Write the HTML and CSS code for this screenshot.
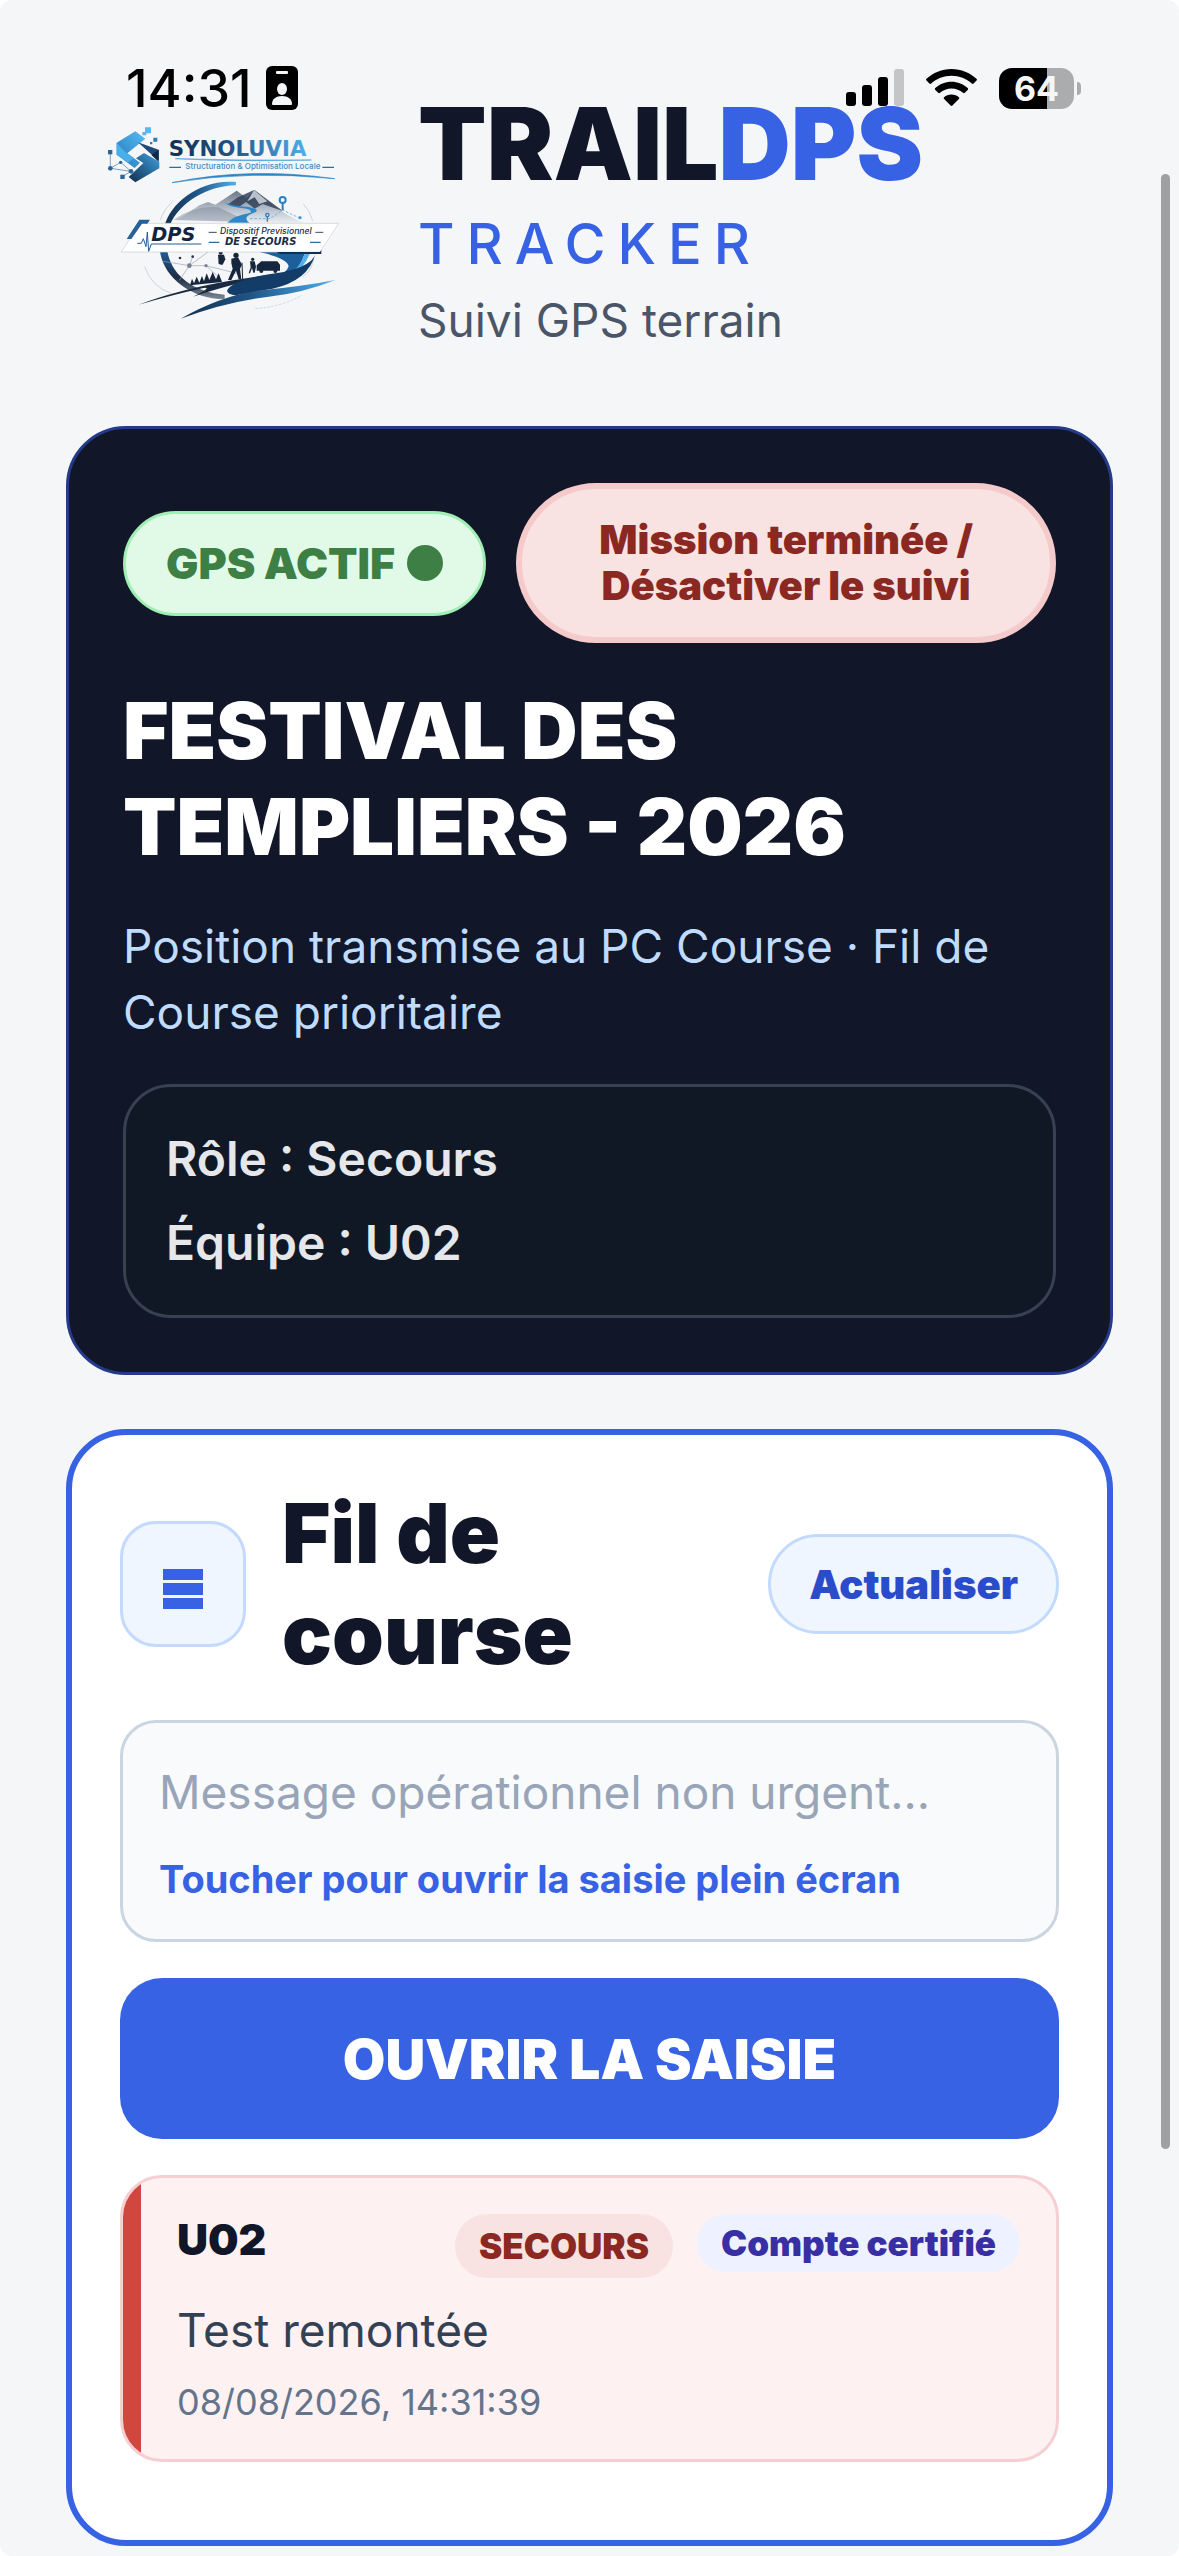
FILE: index.html
```
<!DOCTYPE html>
<html lang="fr">
<head>
    <meta charset="UTF-8">
    <meta name="viewport" content="width=device-width, initial-scale=1.0">
    <title>TrailDPS Tracker</title>
    <link rel="stylesheet" href="styles.css">
</head>
<body>
    <div class="screen">
        <div class="status-bar">
            <div class="status-left">
                <span class="status-time">14:31</span>
                <svg width="32" height="44" viewBox="0 0 32 44" aria-hidden="true">
                    <rect width="32" height="44" rx="6" fill="#000"/>
                    <rect x="10" y="5" width="12" height="3" rx="1" fill="#f5f6f8"/>
                    <ellipse cx="16" cy="23" rx="5" ry="6" fill="#f5f6f8"/>
                    <path d="M6 38c0-5 4-8 10-8s10 3 10 8c0 1-1 1-2 1H8c-1 0-2 0-2-1z" fill="#f5f6f8"/>
                </svg>
            </div>
            <div class="status-right">
                <svg width="58" height="38" viewBox="0 0 58 38" aria-hidden="true">
                    <rect y="23" width="10" height="14" rx="3"/>
                    <rect x="16" y="16" width="10" height="21" rx="3"/>
                    <rect x="32" y="8" width="10" height="29" rx="3"/>
                    <rect x="48" width="10" height="37" rx="3" fill="#c4c5c7"/>
                </svg>
                <svg width="51" height="38" viewBox="0 0 51 38" aria-hidden="true">
                    <path d="M25.500 0C15.800 0 7 3.800.500 9.800c-.6.600-.6 1.200 0 1.800l2.900 2.900c.5.500 1.200.5 1.800 0C10.500 9.700 17.700 6.800 25.500 6.800s15 2.900 20.300 7.700c.6.500 1.300.5 1.800 0l2.900-2.900c.6-.6.6-1.200 0-1.800C44 3.800 35.200 0 25.500 0z"/>
                    <path d="M25.500 12.800c-6.200 0-11.900 2.400-16.200 6.300-.6.600-.6 1.200 0 1.800l2.900 2.900c.5.500 1.200.5 1.800 0 3-2.700 7.100-4.300 11.500-4.300s8.500 1.600 11.500 4.300c.6.500 1.300.5 1.800 0l2.900-2.900c.6-.6.6-1.200 0-1.800-4.300-3.900-10-6.300-16.200-6.300z"/>
                    <path d="M25.500 25.500c-2.900 0-5.500 1-7.400 2.700-.6.500-.6 1.200 0 1.800l6.500 6.600c.5.500 1.300.5 1.800 0l6.500-6.600c.6-.6.6-1.300 0-1.800-1.900-1.700-4.500-2.700-7.400-2.700z"/>
                </svg>
                <div class="battery"><span class="battery-level">64</span></div>
            </div>
        </div>

        <main class="app">
            <header class="app-header">
                <svg class="logo" viewBox="0 0 810 660" role="img" aria-label="Synoluvia DPS">
                    <defs>
                        <linearGradient id="navy" x1="0" y1="0" x2="1" y2="0">
                            <stop offset="0" stop-color="#14304f"/>
                            <stop offset="0.450" stop-color="#1f5486"/>
                            <stop offset="1" stop-color="#4fb0ee"/>
                        </linearGradient>
                        <linearGradient id="ribbon" x1="0" y1="1" x2="1" y2="0">
                            <stop offset="0" stop-color="#2477b8"/>
                            <stop offset="1" stop-color="#55bdf5"/>
                        </linearGradient>
                        <linearGradient id="ribbonDark" x1="0" y1="1" x2="1" y2="0">
                            <stop offset="0" stop-color="#122c4c"/>
                            <stop offset="1" stop-color="#3fa2e2"/>
                        </linearGradient>
                        <linearGradient id="peak" x1="0" y1="0" x2="0" y2="1">
                            <stop offset="0" stop-color="#2c3c54"/>
                            <stop offset="0.600" stop-color="#a3aebd"/>
                            <stop offset="1" stop-color="#eef1f5"/>
                        </linearGradient>
                        <linearGradient id="ring" x1="0" y1="0" x2="0" y2="1">
                            <stop offset="0" stop-color="#1f5c96"/>
                            <stop offset="0.550" stop-color="#1c2c44"/>
                            <stop offset="1" stop-color="#7f8894"/>
                        </linearGradient>
                    </defs>

                    <!-- Synoluvia -->
                    <path d="M80 98l56-34 30 22-54 44 38 28-16 16-54-40z" fill="url(#ribbon)"/>
                    <path d="M144 97l62 22v34l-62-56z" fill="#1f4a78"/>
                    <path d="M206 119v36l-22-20z" fill="#10294a"/>
                    <path d="M208 155v20l-72 42-20-16 44-42-22-14 24-16z" fill="url(#ribbonDark)"/>
                    <path d="M80 98v36l34 24 18-14-26-18z" fill="#4aaee9"/>
                    <path d="M165 52h18v18h-18zM157 66h12v10h-12z" fill="#55b9f2"/>
                    <path d="M190 83h12v12h-12zM180 96h7v7h-7z" fill="#2f7ab2"/>
                    <g stroke="#3b78a8" stroke-width="2" fill="none">
                        <path d="M61 127v48l31-18 31 27-26 16M61 175l62 9"/>
                    </g>
                    <g fill="#2a6597">
                        <rect x="54" y="120" width="13" height="13"/>
                        <circle cx="61" cy="175" r="7"/>
                        <circle cx="92" cy="157" r="5"/>
                        <circle cx="123" cy="184" r="7"/>
                        <rect x="91" y="194" width="13" height="13"/>
                    </g>
                    <text x="236" y="138" class="logo-name" fill="url(#navy)">SYNOLUVIA</text>
                    <path d="M256 146q200 6 408 4q-208 6-408-4z" fill="#4aa3dd" stroke="#4aa3dd" stroke-width="2"/>
                    <path d="M238 172h35M697 172h35" stroke="#2f6d9e" stroke-width="4"/>
                    <text x="286" y="178" class="logo-tagline">Structuration &amp; Optimisation Locale</text>
                    <path d="M246 218q230-48 488-12q-258-26-488 12z" fill="#2f86c4" stroke="#2f86c4" stroke-width="2"/>

                    <!-- mountains, route and ring -->
                    <path d="M224 348C240 280 330 206 438 216v10C350 228 268 278 240 345z" fill="url(#navy)"/>
                    <path d="M262 330l66-44 26-10 22 8 64-42 30 22 24-24 90 70 60 32z" fill="url(#peak)" opacity="0.700"/>
                    <path d="M412 284l32-22 48-22 88 64-62-22-24 14-26-20-22 16z" fill="#2b3a52" opacity="0.800"/>
                    <path d="M492 240l-20 34 22-12 14 20 24-8 20 16z" fill="#f0f3f7" opacity="0.700"/>
                    <path d="M250 330q60-44 136-38l90 44z" fill="#6d7a8d" opacity="0.400"/>
                    <path d="M402 276q20 16 52 18t28 14q-50 8-70 30h66q-22-16 10-28t-18-20q-40 0-68-14z" fill="#2d88cb"/>
                    <path d="M480 326h60l38-26 50 24" fill="none" stroke="#6fb4e2" stroke-width="3" stroke-dasharray="8 5"/>
                    <g fill="none" stroke="#2d7fc0" stroke-width="6">
                        <circle cx="578" cy="270" r="9"/>
                        <path d="M578 280v20"/>
                        <circle cx="532" cy="315" r="5" stroke-width="4"/>
                        <path d="M532 321v14" stroke-width="4"/>
                    </g>
                    <circle cx="630" cy="323" r="5" fill="#4a9dd8"/>
                    <path d="M210 330q10-30 38-56M640 282q20 20 28 50M670 440q0 40-32 60M164 470q20 60 80 80" fill="none" stroke="#b7c2cf" stroke-width="2"/>
                    <path d="M210 424C220 500 300 566 404 568v-14C310 546 246 498 232 424z" fill="url(#ring)"/>
                    <path d="M500 424q90 20 96 44-10 40-150 60-50 10-22 24 190-6 222-128z" fill="#1d5f9b"/>
                    <path d="M646 424q-20 90-190 128 170-24 206-128z" fill="#4fb0ee"/>
                    <path d="M220 454l78 13 50 0 96 24M298 467l-30 44M298 467l60-44M348 467l40 36M308 440l-10 27" stroke="#9aa5b3" stroke-width="2" fill="none"/>
                    <circle cx="298" cy="467" r="7" fill="#76818f"/>
                    <circle cx="348" cy="467" r="5" fill="#76818f"/>
                    <circle cx="270" cy="444" r="4" fill="#26364c"/>
                    <circle cx="308" cy="440" r="4" fill="#26364c"/>
                    <!-- hikers and ambulance -->
                    <g fill="#16263d">
                        <circle cx="392" cy="428" r="6"/>
                        <path d="M384 434h18l4 14-8 16h-4l-8-2z"/>
                        <circle cx="438" cy="436" r="8"/>
                        <path d="M424 446l20-4 12 22-6 12 4 32h-8l-8-26-14 28h-10l14-34-4-16z"/>
                        <circle cx="488" cy="448" r="5"/>
                        <path d="M480 454h14l4 16-4 18h-4l-4-14-6 16h-4l6-18z"/>
                        <path d="M500 466l14-12h48l8 10v18H500z"/>
                        <circle cx="514" cy="483" r="6"/>
                        <circle cx="556" cy="483" r="6"/>
                        <path d="M300 526l6-20 6 14 8-20 8 18 8-20 6 16 8-24 8 20 10-24 10 22 8-18 10 26z"/>
                    </g>
                    <path d="M456 458l2 50" stroke="#16263d" stroke-width="3"/>
                    <path d="M146 584Q260 540 420 512l160-24q-180 40-270 72 60-30 30-26-90 20-194 50z" fill="#1a2a42"/>
                    <path d="M412 540q20-34 170-54 90-20 96-60-20 86-130 110l-110 20q-30-4-26-16z" fill="#143c68"/>
                    <path d="M272 626q130-74 250-86 120-12 214-30-100 40-200 50-130 16-264 66z" fill="url(#navy)"/>
                    <path d="M496 596q80-6 140-40" fill="none" stroke="#b7c8d8" stroke-width="2" stroke-dasharray="8 4"/>

                    <!-- DPS banner -->
                    <path d="M150 340h596l-56 86H94z" fill="#fff" stroke="#c7ced6" stroke-width="2"/>
                    <path d="M148 329h32l-8 12h-16l-32 46h-14z" fill="#28619a"/>
                    <path d="M560 426h130l4-6 0 12H570z" fill="#14304f"/>
                    <path d="M142 400l12 0 6-14 8 24 4-44 4 58 8-22h150" fill="none" stroke="#265d96" stroke-width="3"/>
                    <text x="184" y="394" class="logo-dps">DPS</text>
                    <path d="M356 367h24M676 367h24" stroke="#3c4a5e" stroke-width="3"/>
                    <path d="M356 397h32M660 397h32" stroke="#2f6d9e" stroke-width="4"/>
                    <text x="390" y="373" class="logo-line">Dispositif Previsionnel</text>
                    <text x="405" y="405" class="logo-line logo-line-bold">DE SECOURS</text>
                </svg>
                <div class="brand">
                    <h1 class="brand-name">TRAIL<span>DPS</span></h1>
                    <p class="brand-product">TRACKER</p>
                    <p class="brand-caption">Suivi GPS terrain</p>
                </div>
            </header>

            <section class="card mission">
                <div class="mission-actions">
                    <div class="gps-pill">GPS ACTIF <span class="gps-dot"></span></div>
                    <button class="stop-button" type="button">Mission terminée /<br>Désactiver le suivi</button>
                </div>
                <h2 class="mission-title">FESTIVAL DES TEMPLIERS - 2026</h2>
                <p class="mission-text">Position transmise au PC Course · Fil de Course prioritaire</p>
                <div class="mission-info">
                    <p>Rôle : Secours</p>
                    <p>Équipe : U02</p>
                </div>
            </section>

            <section class="card feed">
                <div class="feed-header">
                    <div class="feed-icon">
                        <svg width="40" height="40" viewBox="0 0 40 40" aria-hidden="true">
                            <path d="M0 0h40v11H0zM0 14h40v12H0zM0 29h40v11H0z" fill="#3762e3"/>
                        </svg>
                    </div>
                    <h2 class="feed-title">Fil de course</h2>
                    <button class="refresh-button" type="button">Actualiser</button>
                </div>
                <button class="message-box" type="button">
                    <span class="message-placeholder">Message opérationnel non urgent...</span>
                    <span class="message-hint">Toucher pour ouvrir la saisie plein écran</span>
                </button>
                <button class="open-button" type="button">OUVRIR LA SAISIE</button>
                <article class="entry">
                    <div class="entry-header">
                        <h3 class="entry-team">U02</h3>
                        <span class="tag tag-role">SECOURS</span>
                        <span class="tag tag-certified">Compte certifié</span>
                    </div>
                    <p class="entry-text">Test remontée</p>
                    <time class="entry-date" datetime="2026-08-08T14:31:39">08/08/2026, 14:31:39</time>
                </article>
            </section>
        </main>
        <div class="scroll-thumb"></div>
    </div>
</body>
</html>
```

FILE: styles.css
```
* {
    box-sizing: border-box;
}

body {
    margin: 0;
    background: #fff;
    color: #111628;
    font-family: Inter, "Liberation Sans", sans-serif;
}

h1, h2, h3, p {
    margin: 0;
}

button {
    font-family: inherit;
    cursor: pointer;
}

.screen {
    position: relative;
    min-height: 100vh;
    overflow: hidden;
    border-radius: 12px;
    background: #f5f6f8;
}

/* phone status bar, drawn over the scrolled page */
.status-bar {
    position: absolute;
    top: 58px;
    left: 0;
    right: 0;
    z-index: 2;
    display: flex;
    justify-content: space-between;
    align-items: center;
    height: 60px;
    padding: 0 105px 0 126px;
}

.status-left, .status-right {
    display: flex;
    align-items: center;
}

.status-left {
    gap: 14px;
}

.status-right {
    gap: 22px;
}

.status-time {
    color: #000;
    font-size: 52px;
    font-weight: 500;
}

.battery {
    position: relative;
    width: 75px;
    height: 41px;
    border-radius: 13px;
    background: linear-gradient(to right, #000 64%, #abacae 64%);
    text-align: center;
}

.battery::after {
    content: "";
    position: absolute;
    top: 14px;
    right: -7px;
    width: 4px;
    height: 13px;
    border-radius: 0 4px 4px 0;
    background: #abacae;
}

.battery-level {
    color: #f5f6f8;
    font-size: 34px;
    font-weight: 700;
    line-height: 41px;
}

.app {
    padding: 84px 66px 0;
}

.app-header {
    display: flex;
    gap: 58px;
    padding: 0 24px;
    margin-bottom: 70px;
}

.logo {
    flex: none;
    width: 270px;
    height: 220px;
    margin-top: 26px;
}

.logo-name {
    font-family: "DejaVu Sans", sans-serif;
    font-size: 64px;
    font-weight: 700;
}

.logo-tagline {
    fill: #3f8cc4;
    font-size: 24px;
    font-weight: 500;
}

.logo-dps {
    fill: #14233f;
    font-family: "DejaVu Sans", sans-serif;
    font-size: 58px;
    font-style: italic;
    font-weight: 700;
}

.logo-line {
    fill: #1d2c44;
    font-size: 26px;
    font-style: italic;
    font-weight: 500;
}

.logo-line-bold {
    font-family: "DejaVu Sans", sans-serif;
    font-size: 30px;
    font-weight: 700;
}

.brand-name {
    font-size: 100px;
    font-weight: 900;
    line-height: 120px;
}

.brand-name span {
    color: #3762e3;
}

.brand-product {
    color: #3762e3;
    font-size: 56px;
    font-weight: 500;
    letter-spacing: 12px;
    line-height: 80px;
}

.brand-caption {
    color: #4b5568;
    font-size: 46px;
    line-height: 72px;
}

.card {
    border-radius: 60px;
}

.mission {
    padding: 54px;
    margin-bottom: 54px;
    border: 3px solid #253a88;
    background: #111628;
}

.mission-actions {
    display: flex;
    align-items: center;
    gap: 30px;
    margin-bottom: 40px;
}

.gps-pill {
    display: flex;
    align-items: center;
    gap: 12px;
    height: 105px;
    padding: 0 40px;
    border: 3px solid #9feeb3;
    border-radius: 54px;
    background: #e1fae8;
    color: #3d7f45;
    font-size: 43px;
    font-weight: 900;
    white-space: nowrap;
}

.gps-dot {
    width: 36px;
    height: 36px;
    border-radius: 50%;
    background: #3d7f45;
}

.stop-button {
    flex: 1;
    height: 160px;
    padding: 0;
    border: 6px solid #f5caca;
    border-radius: 80px;
    background: #f8e3e2;
    color: #8b2822;
    font-size: 40px;
    font-weight: 900;
    line-height: 46px;
    white-space: nowrap;
}

.mission-title {
    max-width: 800px;
    margin-bottom: 38px;
    color: #fff;
    font-size: 78px;
    font-weight: 900;
    line-height: 96px;
}

.mission-text {
    margin-bottom: 39px;
    color: #bfdbfe;
    font-size: 46px;
    line-height: 66px;
}

.mission-info {
    padding: 30px 40px;
    border: 3px solid #374152;
    border-radius: 48px;
    background: #111825;
    color: #e5e7eb;
    font-size: 48px;
    font-weight: 600;
    line-height: 84px;
}

.feed {
    padding: 48px 48px 78px;
    border: 6px solid #3762e3;
    background: #fff;
}

.feed-header {
    display: flex;
    align-items: center;
    gap: 36px;
    margin-bottom: 35px;
}

.feed-icon {
    display: flex;
    flex: none;
    align-items: center;
    justify-content: center;
    width: 126px;
    height: 126px;
    padding-top: 10px;
    border: 3px solid #c3dafc;
    border-radius: 36px;
    background: #eff6ff;
}

.feed-title {
    flex: 1;
    max-width: 400px;
    font-size: 83px;
    font-weight: 900;
    line-height: 101px;
}

.refresh-button {
    height: 100px;
    margin-left: auto;
    padding: 0 38px;
    border: 3px solid #c3dafc;
    border-radius: 50px;
    background: #eff6ff;
    color: #2b4cca;
    font-size: 40px;
    font-weight: 900;
}

.message-box {
    display: block;
    width: 100%;
    padding: 36px;
    margin-bottom: 36px;
    border: 3px solid #cbd5e1;
    border-radius: 36px;
    background: #f8fafc;
    text-align: left;
}

.message-placeholder {
    display: block;
    margin-bottom: 30px;
    color: #98a4b8;
    font-size: 46px;
    line-height: 66px;
}

.message-hint {
    display: block;
    color: #3762e3;
    font-size: 38px;
    font-weight: 700;
    line-height: 48px;
}

.open-button {
    display: block;
    width: 100%;
    height: 161px;
    margin-bottom: 36px;
    border: 0;
    border-radius: 42px;
    background: #3762e3;
    color: #fff;
    font-size: 55px;
    font-weight: 900;
}

.entry {
    position: relative;
    overflow: hidden;
    padding: 36px 36px 33px 54px;
    border: 3px solid #f6cfd2;
    border-radius: 42px;
    background: #fdf1f1;
}

.entry::before {
    content: "";
    position: absolute;
    top: 0;
    bottom: 0;
    left: 0;
    width: 18px;
    background: #d0473f;
}

.entry-header {
    display: flex;
    align-items: flex-start;
    gap: 24px;
    margin-bottom: 16px;
}

.entry-team {
    flex: 1;
    font-size: 43px;
    font-weight: 900;
    line-height: 50px;
}

.tag {
    padding: 0 24px;
    border-radius: 32px;
    font-size: 35px;
    font-weight: 900;
}

.tag-role {
    background: #f8e3e2;
    color: #8b2822;
    line-height: 64px;
}

.tag-certified {
    background: #eef1ff;
    color: #372fa3;
    line-height: 58px;
}

.entry-text {
    margin-bottom: 12px;
    color: #334155;
    font-size: 46px;
    line-height: 72px;
}

.entry-date {
    display: block;
    color: #64748b;
    font-size: 36px;
    line-height: 48px;
}

.scroll-thumb {
    position: absolute;
    top: 174px;
    right: 9px;
    width: 9px;
    height: 1975px;
    border-radius: 5px;
    background: #9fa0a2;
}
```
